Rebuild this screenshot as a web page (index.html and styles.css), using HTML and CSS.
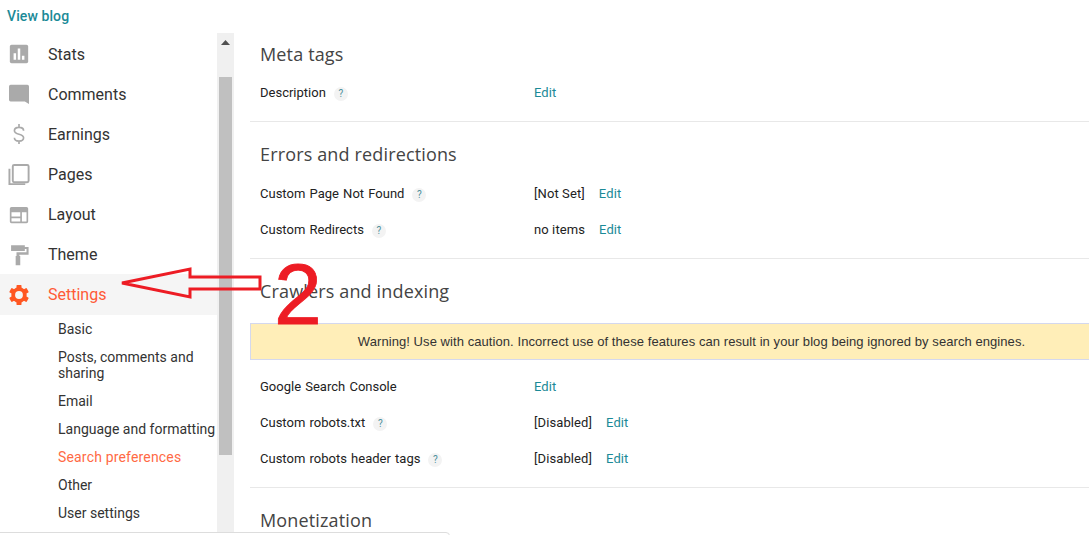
FILE: index.html
```html
<!DOCTYPE html>
<html lang="en">
<head>
<meta charset="utf-8">
<title>Search preferences</title>
<link rel="stylesheet" href="styles.css">
</head>
<body>
<div class="page">
  <header class="topbar"><a class="viewblog">View blog</a></header>
  <div class="columns">
    <nav class="nav">
      <div class="nav-item">
        <svg class="ico" viewBox="0 0 24 24"><path fill="#aaa" d="M3 1h18a2 2 0 0 1 2 2v18a2 2 0 0 1-2 2H3a2 2 0 0 1-2-2V3a2 2 0 0 1 2-2z"/><path fill="#fff" d="M5.500 11h3v8h-3zM10.500 5.500h3V19h-3zM15.500 14h3v5h-3z"/></svg>
        <span>Stats</span></div>
      <div class="nav-item">
        <svg class="ico" viewBox="0 0 24 24"><path fill="#aaa" d="M2 1h20a2 2 0 0 1 2 2v21l-5-3H2a2 2 0 0 1-2-2V3a2 2 0 0 1 2-2z"/></svg>
        <span>Comments</span></div>
      <div class="nav-item">
        <svg class="ico" viewBox="0 0 24 24"><path fill="none" stroke="#aaa" stroke-width="2" d="M17.500 8c0-2.500-2.200-4-5.500-4S6.500 5.500 6.500 8c0 5.500 11 3 11 8.500 0 2.500-2.200 4-5.500 4s-5.500-1.500-5.500-4M12 0v4M12 20v4"/></svg>
        <span>Earnings</span></div>
      <div class="nav-item">
        <svg class="ico ico-pages" viewBox="0 0 24 24"><rect x="5" y="2" width="16.500" height="18" rx="1.500" fill="none" stroke="#aaa" stroke-width="2"/><path fill="none" stroke="#aaa" stroke-width="2" d="M1.500 6v16H18"/></svg>
        <span>Pages</span></div>
      <div class="nav-item">
        <svg class="ico" viewBox="0 0 24 24"><path fill="#aaa" d="M3 3.500h18a2 2 0 0 1 2 2V21a2 2 0 0 1-2 2H3a2 2 0 0 1-2-2V5.500a2 2 0 0 1 2-2z"/><path fill="#fff" d="M3 10h10.500v5H3zM3 17h10.500v4H3zM15.500 10H21v11h-5.500z"/></svg>
        <span>Layout</span></div>
      <div class="nav-item">
        <svg class="ico" viewBox="0 0 24 24"><path fill="#aaa" d="M2.500 1.500H19v7H2.500zM19 3.500h4.500V13H12.500v1.500h1v11H8v-11h1v-4.500h12V6h-2z"/></svg>
        <span>Theme</span></div>
      <div class="nav-item nav-active">
        <svg class="ico" viewBox="0 0 24 24"><g fill="#ff5722"><rect x="9" y="0" width="6" height="24" rx="1"/><rect x="9" y="0" width="6" height="24" rx="1" transform="rotate(60 12 12)"/><rect x="9" y="0" width="6" height="24" rx="1" transform="rotate(120 12 12)"/></g><circle cx="12" cy="12" r="7" fill="none" stroke="#ff5722" stroke-width="4.500"/><circle cx="12" cy="12" r="4.700" fill="#f5f5f5"/></svg>
        <span>Settings</span></div>
      <ul class="subnav">
        <li>Basic</li>
        <li>Posts, comments and sharing</li>
        <li>Email</li>
        <li>Language and formatting</li>
        <li class="current">Search preferences</li>
        <li>Other</li>
        <li>User settings</li>
      </ul>
    </nav>
    <div class="scrollbar">
      <div class="arrow-btn"><svg width="9" height="5" viewBox="0 0 9 5"><path fill="#505050" d="M0 5 4.500 0 9 5z"/></svg></div>
      <div class="thumb"></div>
    </div>
    <main class="main">
      <section class="sec first">
        <h2>Meta tags</h2>
        <div class="row"><div class="label">Description<i class="q">?</i></div><div class="val"><a>Edit</a></div></div>
      </section>
      <section class="sec">
        <h2>Errors and redirections</h2>
        <div class="row"><div class="label">Custom Page Not Found<i class="q">?</i></div><div class="val"><span>[Not Set]</span><a>Edit</a></div></div>
        <div class="row"><div class="label">Custom Redirects<i class="q">?</i></div><div class="val"><span>no items</span><a>Edit</a></div></div>
      </section>
      <section class="sec">
        <h2>Crawlers and indexing</h2>
        <div class="warning">Warning! Use with caution. Incorrect use of these features can result in your blog being ignored by search engines.</div>
        <div class="row short"><div class="label">Google Search Console</div><div class="val"><a>Edit</a></div></div>
        <div class="row"><div class="label">Custom robots.txt<i class="q">?</i></div><div class="val"><span>[Disabled]</span><a>Edit</a></div></div>
        <div class="row"><div class="label">Custom robots header tags<i class="q">?</i></div><div class="val"><span>[Disabled]</span><a>Edit</a></div></div>
      </section>
      <section class="sec last">
        <h2>Monetization</h2>
      </section>
    </main>
  </div>
  <div class="bottom-edge"></div>
  <svg class="callout" width="1089" height="535" viewBox="0 0 1089 535"><path fill="none" stroke="#ed1c24" stroke-width="3" d="M122 283 190 269V277H260V289H190V297Z"/></svg>
  <div class="two-mark">2</div>
</div>
</body>
</html>
```
FILE: styles.css
```css
* { box-sizing: border-box; }
html, body { margin: 0; height: 100%; overflow: hidden; background: #fff; }
.page { position: relative; width: 1089px; height: 535px; overflow: hidden; font-family: Roboto, sans-serif; color: #212121; }
.topbar { height: 33px; padding: 6px 0 0 7px; }
.viewblog { font-size: 14px; font-weight: 500; line-height: 16px; letter-spacing: .1px; color: #1b8a97; }
.columns { display: flex; height: 502px; }
.nav { width: 217px; flex: none; padding-top: 1px; }
.nav-item { height: 40px; display: flex; align-items: center; padding-left: 9px; font-size: 16px; color: #333; }
.nav-item span { margin-left: 19px; }
.ico { width: 20px; height: 20px; flex: none; overflow: visible; }
.ico-pages { width: 23px; height: 23px; margin-left: -1px; margin-right: -2px; }
.nav-active { background: #f5f5f5; height: 41px; color: #ff5a36; }
.subnav { list-style: none; margin: 0; padding: 0 0 0 58px; font-size: 14px; color: #333; }
.subnav li { line-height: 16px; padding: 6px 0; }
.subnav li.current { color: #ff6a45; letter-spacing: .17px; }
.scrollbar { width: 17px; flex: none; background: #f0f0f0; display: flex; flex-direction: column; align-items: center; }
.arrow-btn { height: 44px; width: 100%; display: flex; justify-content: center; padding-top: 7px; }
.thumb { width: 13px; height: 378px; background: #c0c0c0; }
.main { flex: 1; min-width: 0; padding-left: 16px; overflow: hidden; }
.sec { border-bottom: 1px solid #e8e8e8; padding: 20px 0 11px; }
.sec.first { padding-top: 9px; }
.sec.first h2 { margin-bottom: 8px; }
.sec.last { border-bottom: 0; }
.sec h2 { margin: 0 0 9px; padding-left: 10px; font: 400 18px/24px "Open Sans", sans-serif; letter-spacing: .15px; color: #444; }
.row { display: flex; height: 36px; align-items: center; font-size: 13px; color: #222; padding-left: 10px; }
.row.short { height: 35px; }
.label { width: 274px; flex: none; display: flex; align-items: center; word-spacing: 1px; }
.val { display: flex; gap: 14px; letter-spacing: .1px; }
.viewblog, .val a { color: #1b8a97; }
.q { width: 14px; height: 14px; margin: 4px 0 0 8px; border-radius: 50%; background: #f3f3f3; color: #4b8f9b; font-size: 10px; line-height: 14px; text-align: center; font-style: normal; }
.warning { height: 37px; margin: 20px -44px 9px 0; background: #ffeeb8; border: 1px solid #d4d8ee; text-align: center; font: 13px/35px "Liberation Sans", sans-serif; letter-spacing: .07px; color: #333; }
.bottom-edge { position: absolute; left: -10px; top: 532px; width: 460px; height: 12px; background: #fff; border: 1px solid #ddd; border-radius: 4px; }
.callout { position: absolute; left: 0; top: 0; pointer-events: none; }
.two-mark { position: absolute; left: 274px; top: 249px; font: 400 86px/90px "Liberation Sans", sans-serif; -webkit-text-stroke: .8px #ed1c24; color: #ed1c24; }
```
